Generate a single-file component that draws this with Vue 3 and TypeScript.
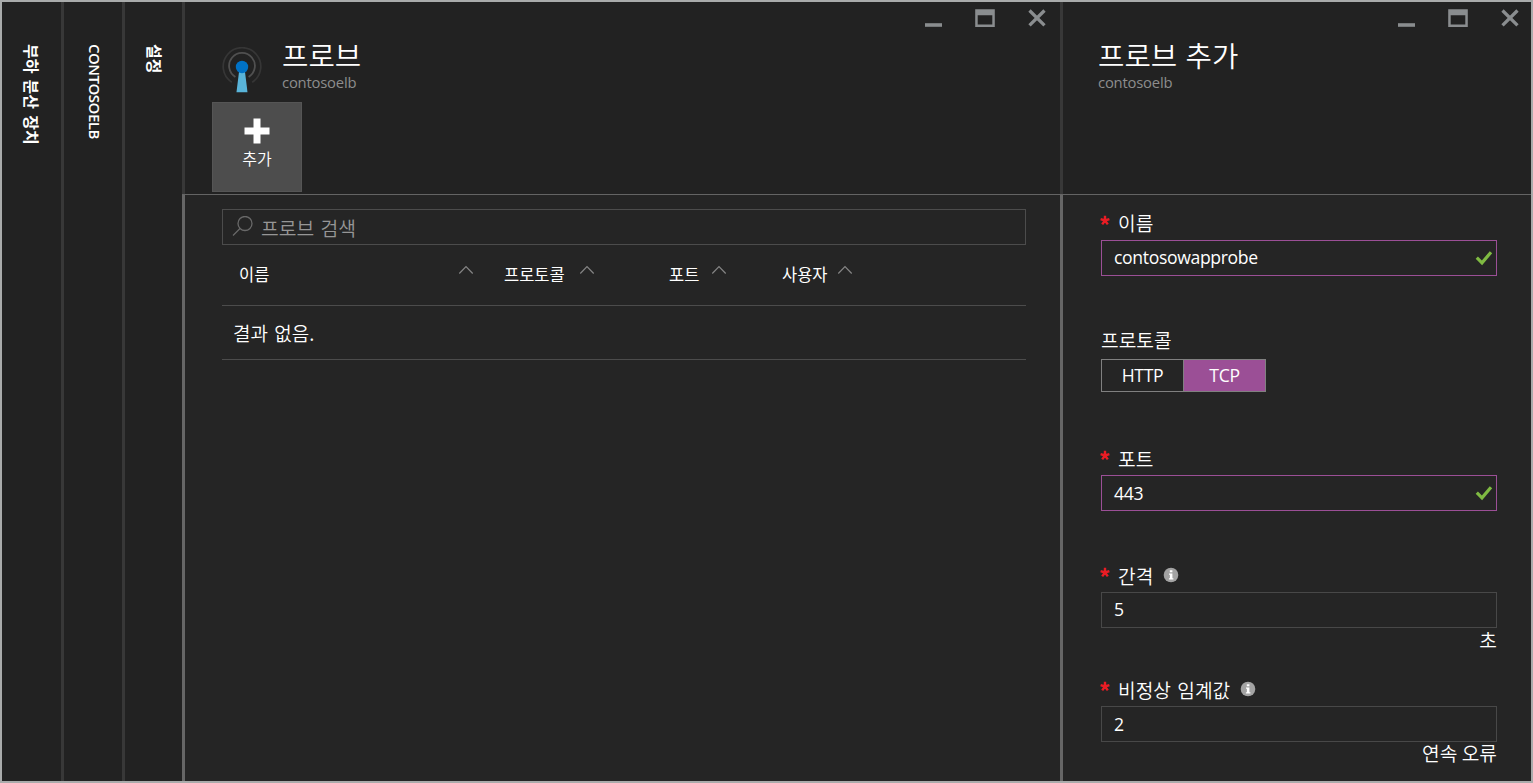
<script setup lang="ts">
interface Column {
  key: string
  label: string
}

interface Field {
  key: string
  label: string
  value: string
  valid?: boolean
  info?: boolean
  unit?: string
}

const strips: Column[] = [
  { key: 'balancers', label: '부하 분산 장치' },
  { key: 'resource', label: 'CONTOSOELB' },
  { key: 'settings', label: '설정' },
]

const columns: Column[] = [
  { key: 'name', label: '이름' },
  { key: 'protocol', label: '프로토콜' },
  { key: 'port', label: '포트' },
  { key: 'used', label: '사용자' },
]

const fields: Field[] = [
  { key: 'name', label: '이름', value: 'contosowapprobe', valid: true },
  { key: 'port', label: '포트', value: '443', valid: true },
  { key: 'interval', label: '간격', value: '5', info: true, unit: '초' },
  { key: 'threshold', label: '비정상 임계값', value: '2', info: true, unit: '연속 오류' },
]
</script>

<template>
  <div class="portal">
    <div v-for="s in strips" :key="s.key" class="strip" :class="s.key">
      <span class="strip-text">{{ s.label }}</span>
    </div>

    <section class="blade list">
      <header class="head">
        <div class="controls">
          <svg width="124" height="22" viewBox="0 0 124 22">
            <path d="M1 15.2h17v3.6H1z" fill="#8a8d8f" />
            <path d="M51.2 1.200h19.600v17.800H51.200zM53.700 7.200v9.200h14.600V7.200z" fill="#8a8d8f" fill-rule="evenodd" />
            <path d="M105.500 2.500 120.500 17.300M120.500 2.500 105.500 17.300" stroke="#8a8d8f" stroke-width="3.300" fill="none" />
          </svg>
        </div>
        <div class="identity">
          <svg class="probe" width="40" height="48" viewBox="0 0 40 48">
            <path d="M9.800 35.300A18.800 18.800 0 1 1 30.200 35.300" stroke="#363636" stroke-width="1.700" fill="none" />
            <path d="M13.400 29.900A12.900 12.900 0 1 1 26.600 29.900" stroke="#505050" stroke-width="1.800" fill="none" />
            <path d="M17.100 24h5.800l2.600 21.200h-11z" fill="#59b4d9" />
            <circle cx="20" cy="20" r="6.200" fill="#0072c6" />
          </svg>
          <div>
            <h1 class="title">프로브</h1>
            <p class="sub">contosoelb</p>
          </div>
        </div>
        <button class="add">
          <svg width="26" height="26" viewBox="0 0 26 26">
            <path d="M9.500 .5h7v9h9v7h-9v9h-7v-9h-9v-7h9z" fill="#fff" />
          </svg>
          <span>추가</span>
        </button>
      </header>
      <div class="body">
        <div class="search">
          <svg width="22" height="22" viewBox="0 0 22 22" fill="none" stroke="#696969" stroke-width="1.300">
            <circle cx="13" cy="7.500" r="7" />
            <path d="M8 12.500 1 19.500" />
          </svg>
          <span>프로브 검색</span>
        </div>
        <div class="columns">
          <div v-for="c in columns" :key="c.key" class="col" :class="c.key">
            <span>{{ c.label }}</span>
            <svg width="16" height="10" viewBox="0 0 16 10">
              <path d="M1.300 8.500 8 1.500 14.700 8.500" fill="none" stroke="#858585" stroke-width="1.200" />
            </svg>
          </div>
        </div>
        <div class="empty">결과 없음.</div>
      </div>
    </section>

    <section class="blade form">
      <header class="head">
        <div class="controls">
          <svg width="124" height="22" viewBox="0 0 124 22">
            <path d="M1 15.200h17v3.600H1z" fill="#8a8d8f" />
            <path d="M51.200 1.200h19.600v17.800H51.200zM53.700 7.200v9.200h14.600V7.200z" fill="#8a8d8f" fill-rule="evenodd" />
            <path d="M105.500 2.500 120.500 17.300M120.500 2.500 105.500 17.300" stroke="#8a8d8f" stroke-width="3.300" fill="none" />
          </svg>
        </div>
        <div class="identity">
          <div>
            <h1 class="title">프로브 추가</h1>
            <p class="sub">contosoelb</p>
          </div>
        </div>
      </header>
      <div class="body">
        <template v-for="f in fields" :key="f.key">
          <div class="field" :class="f.key">
            <div class="label">
              <svg class="star" width="10" height="12" viewBox="0 0 10 12">
                <path d="M5 5.500V.8M5 5.500 .6 4.100M5 5.500 9.400 4.100M5 5.500 2.200 9.400M5 5.500 7.800 9.400" stroke="#ea1c24" stroke-width="2.400" />
              </svg>
              <span>{{ f.label }}</span>
              <svg v-if="f.info" class="info" width="16" height="16" viewBox="0 0 16 16">
                <circle cx="8" cy="8" r="7.300" fill="#a3a3a3" />
                <path d="M6.800 3.200h2.600v2H6.800zM6 6.500h3.400v4.700h1V12.500H5.900v-1.300h1V7.800H6z" fill="#fff" />
              </svg>
            </div>
            <div class="input" :class="{ valid: f.valid }">
              <span>{{ f.value }}</span>
              <svg v-if="f.valid" width="18" height="16" viewBox="0 0 18 16">
                <path d="M1.800 7.600 7 12.800 16 2.200" fill="none" stroke="#7fba42" stroke-width="3.200" />
              </svg>
            </div>
            <div v-if="f.unit" class="unit">{{ f.unit }}</div>
          </div>
          <div v-if="f.key === 'name'" class="field protocol-field">
            <div class="label">프로토콜</div>
            <div class="toggle">
              <span>HTTP</span>
              <span class="on">TCP</span>
            </div>
          </div>
        </template>
      </div>
    </section>
  </div>
</template>

<style>
body {
  margin: 0;
  background: #252525;
}
</style>

<style scoped>
* {
  box-sizing: border-box;
}

.portal {
  width: 1533px;
  height: 783px;
  border: 2px solid #a9abab;
  display: flex;
  background: #252525;
  color: #fff;
  font-family: "Noto Sans", "Noto Sans CJK KR", sans-serif;
  font-size: 17px;
  overflow: hidden;
}

.strip {
  flex: none;
  width: 62px;
  border-right: 3px solid #383838;
  background: #222;
  padding-top: 42px;
}

.strip.resource {
  width: 61px;
}

.strip.settings {
  width: 57px;
  border-right: 0;
}

.strip-text {
  display: block;
  writing-mode: vertical-rl;
  text-orientation: sideways;
  line-height: 20px;
  margin-left: 19px;
  font-size: 16px;
  font-weight: 600;
  word-spacing: 2px;
  white-space: nowrap;
}

.resource .strip-text {
  margin-left: 21px;
  font-family: "Open Sans", sans-serif;
  font-size: 15px;
  letter-spacing: -0.5px;
}

.blade {
  flex: none;
  display: flex;
  flex-direction: column;
}

.list {
  width: 878px;
}

.form {
  width: 471px;
}

.head {
  height: 192px;
  flex: none;
  background: #222;
  border-left: 3px solid #383838;
}

.body {
  flex: 1;
  border-top: 1px solid #646464;
  border-left: 3px solid #666;
}

.controls {
  display: flex;
  justify-content: flex-end;
  height: 37px;
  padding: 6px 12px 0 0;
}

.form .controls {
  padding-right: 10px;
}

.identity {
  display: flex;
  height: 63px;
}

.probe {
  margin: 8px 20px 0 37px;
}

.form .identity {
  padding-left: 35px;
}

.title {
  margin: 0;
  font-family: "Noto Sans CJK KR", sans-serif;
  font-size: 28.700px;
  font-weight: 350;
  line-height: 32px;
  word-spacing: 2px;
}

.sub {
  margin: 1px 0 0;
  font-family: "Open Sans", sans-serif;
  font-size: 14.800px;
  letter-spacing: -0.200px;
  line-height: 20px;
  color: #8d8d8d;
}

.add {
  display: flex;
  flex-direction: column;
  align-items: center;
  width: 90px;
  height: 90px;
  margin: 0 0 0 27px;
  padding: 15px 0 0;
  border: 1px solid #555;
  background: #4d4d4d;
  color: #fff;
  font-family: "Noto Sans CJK KR", sans-serif;
  font-size: 16px;
  font-weight: 350;
  line-height: 20px;
}

.add span {
  margin-top: 4px;
}

.search {
  display: flex;
  align-items: center;
  width: 804px;
  height: 36px;
  margin: 14px 0 0 37px;
  padding-left: 9px;
  border: 1px solid #4c4c4c;
  color: #969696;
  font-family: "Noto Sans CJK KR", sans-serif;
  font-size: 19.300px;
  font-weight: 350;
  word-spacing: 2px;
}

.search span {
  margin-left: 7px;
  line-height: 28px;
  padding-top: 1px;
}

.columns {
  display: flex;
  width: 804px;
  height: 61px;
  margin-left: 37px;
  border-bottom: 1px solid #4c4c4c;
  font-size: 16.500px;
  line-height: 20px;
  padding: 20px 0 0 17px;
}

.col {
  display: flex;
  justify-content: space-between;
  flex: none;
}

.col.name {
  width: 235px;
  margin-right: 30px;
}

.col.protocol {
  width: 91px;
  margin-right: 74px;
}

.col.port {
  width: 58px;
  margin-right: 55px;
}

.col.used {
  width: 71px;
}

.empty {
  width: 804px;
  height: 54px;
  margin-left: 37px;
  padding-left: 11px;
  border-bottom: 1px solid #4c4c4c;
  font-family: "Noto Sans CJK KR", sans-serif;
  font-size: 19px;
  font-weight: 350;
  word-spacing: 2px;
  line-height: 53px;
}

.form .body {
  padding: 14px 34px 0 38px;
}

.field {
  height: 117px;
}

.label {
  display: flex;
  align-items: center;
  height: 31px;
  font-family: "Noto Sans CJK KR", sans-serif;
  font-size: 19.200px;
  font-weight: 350;
  word-spacing: 2px;
  line-height: 30px;
}

.label span {
  padding-bottom: 2px;
}

.name .label {
  padding-bottom: 1px;
}

.star {
  margin: -7px 8px 0 -1px;
}

.info {
  margin: -3px 0 0 10px;
}

.input {
  display: flex;
  align-items: center;
  justify-content: space-between;
  height: 36px;
  padding: 0 3px 0 12px;
  border: 1px solid #484848;
  font-family: "Open Sans", sans-serif;
  font-size: 17.600px;
  letter-spacing: -0.350px;
}

.input span {
  padding-bottom: 2px;
}

.port .input span,
.threshold .input span {
  padding-bottom: 0;
}

.input.valid {
  border-color: #9b4f96;
}

.unit {
  height: 28px;
  line-height: 25px;
  font-family: "Noto Sans CJK KR", sans-serif;
  font-size: 19.200px;
  font-weight: 350;
  text-align: right;
}

.threshold .unit {
  line-height: 23px;
}

.protocol-field {
  height: 118px;
}

.protocol-field .label {
  align-items: flex-start;
  height: 33px;
  line-height: 28px;
}

.toggle {
  display: flex;
  width: 165px;
  height: 33px;
  border: 1px solid #808080;
  font-family: "Open Sans", sans-serif;
  font-size: 17.600px;
  letter-spacing: -0.350px;
  line-height: 31px;
}

.toggle span {
  flex: 1;
  text-align: center;
}

.toggle .on {
  background: #9b4f96;
  border-left: 1px solid #808080;
}

.field.interval {
  height: 114px;
}
</style>
